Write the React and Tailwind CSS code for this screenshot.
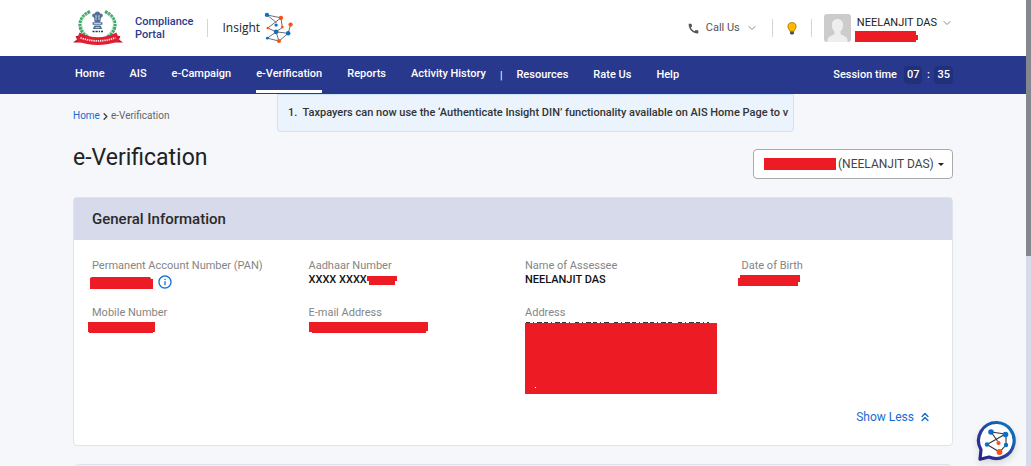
import React from "react";
import { MdCall, MdInfoOutline } from "react-icons/md";
import { ChevronDown, ChevronRight, ChevronsUp } from "lucide-react";

const navLinks = ["Home", "AIS", "e-Campaign", "e-Verification", "Reports", "Activity History"];
const moreLinks = ["Resources", "Rate Us", "Help"];

/* Redaction bar: the polygon's notches give the marker its uneven ends. */
function Redacted({ width, height = 11, points, className = "" }) {
  return (
    <svg width={width} height={height} viewBox={`0 0 ${width} ${height}`} className={`shrink-0 ${className}`} role="img" aria-label="Redacted">
      <polygon points={points || `0,0 ${width},0 ${width},${height} 0,${height}`} fill="#ed1c24" />
    </svg>
  );
}

function Emblem() {
  return (
    <svg width="50" height="36" viewBox="0 0 50 36" className="shrink-0" role="img" aria-label="Income Tax Department">
      <path d="M17 1.5C3 8 5 22 15 27" fill="none" stroke="#3da867" strokeWidth="3.2" strokeDasharray="2.6 0.7" />
      <path d="M32 1.5C46 8 44 22 34 27" fill="none" stroke="#3da867" strokeWidth="3.2" strokeDasharray="2.6 0.7" />
      <path d="M15 3C5 10 8 21 16 26M34 3C44 10 41 21 33 26" fill="none" stroke="#a4d8b5" strokeWidth="0.8" />
      <g fill="#4f6f96">
        <circle cx="24.5" cy="4.3" r="2.7" />
        <circle cx="21.3" cy="5.6" r="2.1" />
        <circle cx="27.7" cy="5.6" r="2.1" />
        <path d="M21 7h7l-.7 5.2h-5.6z" />
        <path d="M19.6 12.2h9.8v2.6h-9.8z" />
        <path d="M21.4 15.5h6.2l1.6 3.6h-9.4z" />
      </g>
      <path d="M23 5v5M26 5v5M21 13.5h7M22.5 17.5h4" stroke="#dce5ee" strokeWidth="0.8" />
      <path d="M19.5 21.5h2M22.5 21.5h2.2M25.7 21.5h1.4M28 21.5h2" stroke="#333" strokeWidth="1.4" />
      <path d="M0 32.5 4 29.5 2.6 26.2 9 25l2 6.5-3.5 1zM50 32.5 46 29.5 47.4 26.2 41 25l-2 6.5 3.5 1z" fill="#b9162c" />
      <path d="M6.5 22.5Q24.5 32 43.5 22.5L46.5 31Q24.5 39 3.5 31z" fill="#e11f33" />
      <path d="M7.5 27.8Q24.5 34 42.5 27.8" fill="none" stroke="#fff" strokeWidth="1.8" strokeDasharray="1.4 0.8" opacity="0.85" />
    </svg>
  );
}

function InsightMark() {
  return (
    <svg width="29" height="32" viewBox="0 0 30 33" className="shrink-0" aria-hidden="true">
      <path d="M3 3 17.5 6 4 16.5 12.5 20.5 3.5 27 15.5 30 25 22 27.5 13M3 3l10 8M17.5 6l1.5 10-6.5 4.5L25 22M12.5 20.5l3 9.5" fill="none" stroke="#444" strokeWidth="0.8" />
      <g fill="#0b6fc2">
        <circle cx="3" cy="3" r="2.2" />
        <circle cx="12.5" cy="13.5" r="1.7" />
        <circle cx="12.5" cy="20.5" r="2.4" />
        <circle cx="25" cy="22" r="2.3" />
        <circle cx="3.5" cy="27" r="1.5" />
      </g>
      <g fill="#fb5012">
        <circle cx="17.5" cy="6" r="2.3" />
        <circle cx="4" cy="16.5" r="1.4" />
        <circle cx="19" cy="15.5" r="1.4" />
        <circle cx="27.5" cy="13" r="2.2" />
        <circle cx="15.5" cy="30" r="2.1" />
      </g>
    </svg>
  );
}

function Bulb() {
  return (
    <svg width="10" height="13" viewBox="0 0 10 13" aria-hidden="true">
      <path d="M5 .6a4.1 4.1 0 0 0-4.1 4.1C.9 6.6 2.6 7.6 2.9 9.3h4.2C7.4 7.6 9.1 6.6 9.1 4.7A4.1 4.1 0 0 0 5 .6z" fill="#ffb900" stroke="#a87500" strokeWidth="0.8" />
      <path d="M3 9.5h4v1.8L6 12.5H4l-1-1.2z" fill="#555" />
    </svg>
  );
}

function Avatar() {
  return (
    <svg width="27" height="28" viewBox="0 0 27 28" className="shrink-0" aria-hidden="true">
      <rect width="27" height="28" rx="3" fill="#ccc" />
      <path d="M13.5 5c3.6 0 5.6 2.5 5.6 6 0 3-1.2 5.2-2.6 6.5v2.3c0 1.3 5 2.2 6.3 4.2.7 1 .7 2.5.7 4h-20c0-1.5 0-3 .7-4 1.3-2 6.3-2.9 6.3-4.2v-2.3C9.1 16.2 7.9 14 7.9 11c0-3.5 2-6 5.6-6z" fill="#eee" />
    </svg>
  );
}

function ChatMark() {
  return (
    <svg width="42" height="42" viewBox="0 0 42 42" className="drop-shadow-md" aria-hidden="true">
      <defs>
        <linearGradient id="ring" x1="0" y1="1" x2="1" y2="0">
          <stop offset="0" stopColor="#2b1f8f" />
          <stop offset="0.45" stopColor="#27419f" />
          <stop offset="1" stopColor="#007fc8" />
        </linearGradient>
      </defs>
      <path d="M21 2.5a18 18 0 1 1-8 34.5L4 39.2l1-9.6A18 18 0 0 1 21 2.5z" fill="#fff" stroke="url(#ring)" strokeWidth="3.2" strokeLinejoin="round" />
      <path d="M15 12 29.5 14 11 24.5 23.5 32 30 25V14M15 12l6.5 9" fill="none" stroke="#333" strokeWidth="1.1" />
      <g fill="#0b6fc2">
        <circle cx="15" cy="12" r="2.8" />
        <circle cx="29.5" cy="14.5" r="2.8" />
        <circle cx="11" cy="24.5" r="2.2" />
        <circle cx="30" cy="25" r="2.2" />
      </g>
      <circle cx="22.5" cy="23" r="2.1" fill="#fb5012" />
      <circle cx="23.5" cy="32" r="2.9" fill="#fb5012" />
    </svg>
  );
}

function Field({ label, children }) {
  return (
    <div>
      <dt className="text-[11px] leading-4 text-[#858585]">{label}</dt>
      <dd className="flex h-3 items-center text-[11px] font-medium leading-3 text-[#111]">{children}</dd>
    </div>
  );
}

function Divider() {
  return <span className="h-[18px] w-px bg-[#d5d5d5]" />;
}

export default function App() {
  return (
    <div className="flex h-screen overflow-hidden bg-[#f5f7fb] font-['Roboto','Liberation_Sans',sans-serif] text-[#222]">
      <div className="relative min-w-0 flex-1 overflow-hidden">
        <header className="bg-white">
          <div className="mx-auto flex h-14 max-w-[880px] items-center justify-between">
            <div className="flex items-center">
              <a href="#" className="flex items-center gap-3">
                <Emblem />
                <span className="text-[11px] font-medium leading-[13px] text-[#293a8e]">
                  Compliance
                  <br />
                  Portal
                </span>
              </a>
              <span className="mx-3.5 h-[18px] w-px bg-[#d5d5d5]" />
              <a href="#" className="flex items-center gap-1 font-['Open_Sans',sans-serif] text-[12px] text-[#222]">
                Insight
                <InsightMark />
              </a>
            </div>
            <div className="flex items-center">
              <button type="button" className="mr-3.5 flex items-center text-[11px] text-[#555]">
                <MdCall size={13} className="mr-1.5" />
                Call Us
                <ChevronDown size={12} strokeWidth={2} className="ml-1.5 text-[#888]" />
              </button>
              <Divider />
              <button type="button" aria-label="Tips" className="mx-3.5">
                <Bulb />
              </button>
              <Divider />
              <button type="button" className="ml-3 flex items-center gap-1.5 text-left">
                <Avatar />
                <span className="flex flex-col">
                  <span className="flex items-center gap-1 text-[11px] leading-4">
                    NEELANJIT DAS
                    <ChevronDown size={12} strokeWidth={2} className="text-[#888]" />
                  </span>
                  <Redacted width={63} height={11} points="0,0 61,0 61,4 63,4 63,9 61,9 61,11 0,11" className="-ml-0.5" />
                </span>
              </button>
            </div>
          </div>
        </header>

        <nav aria-label="Main" className="bg-[#28388c] text-[11px] font-medium text-white">
          <div className="mx-auto flex h-[38px] max-w-[880px] items-center justify-between pl-0.5">
            <div className="flex h-full items-center">
              <ul className="flex h-full items-center gap-[25px]">
                {navLinks.map((name) => (
                  <li key={name} className="h-full">
                    <a
                      href="#"
                      className={
                        name === "e-Verification"
                          ? "flex h-[37px] items-center border-b-3 border-white pt-[3px]"
                          : "flex h-[37px] items-center"
                      }
                    >
                      {name}
                    </a>
                  </li>
                ))}
              </ul>
              <span className="mx-3.5 text-[10px]">|</span>
              <ul className="flex items-center gap-[25px]">
                {moreLinks.map((name) => (
                  <li key={name}>
                    <a href="#">{name}</a>
                  </li>
                ))}
              </ul>
            </div>
            <div className="flex items-center">
              <span className="mr-[7px]">Session time</span>
              <span className="rounded-sm bg-[#22307c] px-[3px] leading-[18px]">07</span>
              <span className="w-3 text-center">:</span>
              <span className="rounded-sm bg-[#22307c] px-[3px] leading-[18px]">35</span>
            </div>
          </div>
        </nav>

        <main className="mx-auto max-w-[880px]">
          <div className="flex h-[38px] items-start">
            <nav aria-label="Breadcrumb" className="flex w-[204px] items-center pt-3.5 text-[10px] leading-4 text-[#666]">
              <a href="#" className="text-[#1a6bd0]">Home</a>
              <ChevronRight size={11} strokeWidth={3} className="text-[#444]" />
              <span>e-Verification</span>
            </nav>
            <div className="w-[517px] rounded-b border border-[#cfe2f8] bg-[#ebf3fd] pl-2.5 pr-1">
              <p className="overflow-hidden whitespace-nowrap text-[11px] font-medium leading-9 text-[#333]">
                1.&nbsp; Taxpayers can now use the ‘Authenticate Insight DIN’ functionality available on AIS Home Page to v
              </p>
            </div>
          </div>

          <div className="flex items-start justify-between">
            <h1 className="pt-2.5 text-[23px] leading-8">e-Verification</h1>
            <div className="mt-[17px] flex h-[30px] items-center rounded-sm border border-[#aaa] bg-white pl-2.5 pr-2 text-[12px] text-[#444]">
              <Redacted width={72} height={12} />
              <select aria-label="Taxpayer" className="ml-0.5 appearance-none bg-transparent">
                <option>(NEELANJIT DAS)</option>
              </select>
              <span className="ml-[3px] border-x-3 border-t-3 border-x-transparent border-t-[#222]" />
            </div>
          </div>

          <section className="mt-[18px] rounded-sm border border-[#dfe3ec] bg-white">
            <h2 className="bg-[#d7daea] px-[18px] text-[15px] font-medium leading-[42px] text-[#2a2a2a]">General Information</h2>
            <dl className="grid grid-cols-4 gap-x-6 gap-y-[19px] px-[18px] pt-[18px]">
              <Field label="Permanent Account Number (PAN)">
                <Redacted width={63} height={13} points="0,2 2,1 60,1 61,3 63,3 63,13 0,13" className="-ml-0.5 mt-1" />
                <button type="button" aria-label="About PAN" className="ml-1 mt-1 text-[#1673d6]">
                  <MdInfoOutline size={16} />
                </button>
              </Field>
              <Field label="Aadhaar Number">
                XXXX XXXX
                <Redacted width={30} height={9} points="0,0 30,0 30,5 28,5 28,9 2,9 2,5 0,5" />
              </Field>
              <Field label="Name of Assessee">NEELANJIT DAS</Field>
              <Field label="Date of Birth">
                <Redacted width={62} height={11} points="2,0 62,0 62,7 60,7 60,11 0,11 0,3 2,3" className="-ml-1" />
              </Field>
              <Field label="Mobile Number">
                <Redacted width={67} points="0,0 67,0 67,10 65,10 65,11 1,11 1,10 0,10" className="-ml-1" />
              </Field>
              <Field label="E-mail Address">
                <Redacted width={119} points="0,0 119,0 119,9 117,9 117,11 3,11 3,10 0,10" />
              </Field>
              <div>
                <dt className="text-[11px] leading-4 text-[#858585]">Address</dt>
                <dd>
                  <svg width="192" height="73" viewBox="0 0 192 73" className="block" role="img" aria-label="Redacted">
                    <path d="M1 1.5h45M50 1.5h34M89 1.5h60M153 1.5h31" stroke="#333" strokeWidth="1" strokeDasharray="4 3 1 3 5 2" />
                    <rect y="2" width="192" height="71" fill="#ed1c24" />
                    <rect x="10" y="66" width="1" height="1" fill="#fff" />
                  </svg>
                </dd>
              </div>
            </dl>
            <div className="flex justify-end px-5 pb-5 pt-[15px]">
              <button type="button" className="flex items-center gap-1 text-[12px] leading-4 text-[#1a6bd0]">
                Show Less
                <ChevronsUp size={14} strokeWidth={2.5} />
              </button>
            </div>
          </section>

          <section aria-label="Next section" className="mt-[18px] h-10 rounded-t-md border border-[#dfe3ec] bg-[#f0f1f4]" />
        </main>

        <button type="button" aria-label="Open chat" className="absolute bottom-1 right-2">
          <ChatMark />
        </button>
      </div>
      <div className="w-[5px] shrink-0 bg-[#d7daea]">
        <div className="h-[55%] bg-[#85878f]" />
      </div>
    </div>
  );
}
